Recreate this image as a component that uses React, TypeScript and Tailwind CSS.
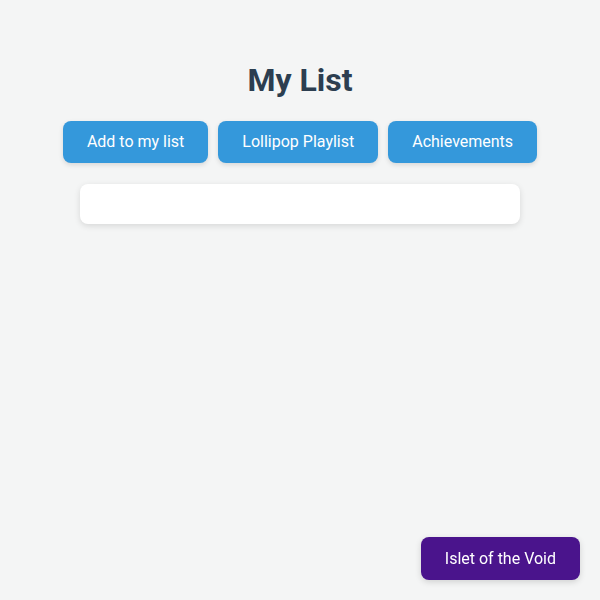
export default function App() {
  return (
    <div
      className="min-h-[600px] w-full bg-[#f4f5f5] flex flex-col items-center pt-[61px]"
      style={{ fontFamily: "Roboto, 'Liberation Sans', sans-serif" }}
    >
      <h1 className="text-[32px] leading-[38px] font-bold text-[#2c3e50] mb-[22px]">My List</h1>
      <div className="flex gap-[10px]">
        <button className="h-[42px] px-6 rounded-lg bg-[#3498db] text-white text-[16px] shadow-[0_2px_5px_rgba(0,0,0,0.12)]">
          Add to my list
        </button>
        <button className="h-[42px] px-6 rounded-lg bg-[#3498db] text-white text-[16px] shadow-[0_2px_5px_rgba(0,0,0,0.12)]">
          Lollipop Playlist
        </button>
        <button className="h-[42px] px-6 rounded-lg bg-[#3498db] text-white text-[16px] shadow-[0_2px_5px_rgba(0,0,0,0.12)]">
          Achievements
        </button>
      </div>
      <div className="mt-[21px] w-[440px] h-[40px] bg-white rounded-lg shadow-[0_2px_6px_rgba(0,0,0,0.12)]" />
      <button className="fixed right-[20px] bottom-[20px] h-[43px] px-6 rounded-lg bg-[#4a148c] text-white text-[16px] shadow-[0_2px_6px_rgba(0,0,0,0.15)]">
        Islet of the Void
      </button>
    </div>
  );
}
